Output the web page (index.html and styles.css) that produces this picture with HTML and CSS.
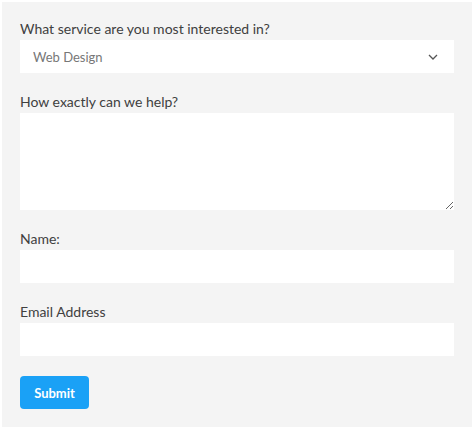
FILE: index.html
```html
<!DOCTYPE html>
<html lang="en">
<head>
    <meta charset="UTF-8">
    <meta name="viewport" content="width=device-width, initial-scale=1.0">
    <title>Contact</title>
    <link rel="stylesheet" href="styles.css">
</head>
<body>
    <form class="contact-form">
        <div class="form-group">
            <label for="service">What service are you most interested in?</label>
            <div class="select-wrap">
                <select id="service">
                    <option>Web Design</option>
                    <option>Branding</option>
                    <option>Marketing</option>
                </select>
                <svg class="chevron" width="10" height="6" viewBox="0 0 10 6">
                    <path d="M1 1l4 4 4-4" fill="none" stroke="#555" stroke-width="1.3"/>
                </svg>
            </div>
        </div>
        <div class="form-group">
            <label for="help">How exactly can we help?</label>
            <textarea id="help"></textarea>
        </div>
        <div class="form-group">
            <label for="name">Name:</label>
            <input type="text" id="name">
        </div>
        <div class="form-group">
            <label for="email">Email Address</label>
            <input type="email" id="email">
        </div>
        <button type="submit" class="submit-btn">Submit</button>
    </form>
</body>
</html>
```

FILE: styles.css
```css
body {
    margin: 0;
    font-family: 'Lato', sans-serif;
    background: #fff;
    color: #404040;
}
.contact-form {
    margin: 2px;
    padding: 18px;
    background: #f4f4f4;
    height: 389px;
}
.form-group {
    display: flex;
    flex-direction: column;
    margin-bottom: 20px;
}
.form-group label {
    font-size: 14px;
    line-height: 18px;
    padding-bottom: 2px;
}
.select-wrap {
    position: relative;
}
.select-wrap select {
    appearance: none;
    -webkit-appearance: none;
    width: 100%;
    height: 33px;
    border: none;
    background: white;
    padding: 0 13px;
    font-family: 'Lato', sans-serif;
    font-size: 13px;
    color: #777;
    outline: none;
    border-radius: 0;
}
.chevron {
    position: absolute;
    right: 16px;
    top: 14px;
    pointer-events: none;
}
textarea,
input {
    border: none;
    background: white;
    outline: none;
    font-family: 'Lato', sans-serif;
    box-sizing: border-box;
    width: 100%;
}
textarea {
    height: 97px;
    resize: vertical;
    display: block;
}
input {
    height: 33px;
}
.submit-btn {
    background: #1aa1f6;
    color: white;
    border: none;
    border-radius: 4px;
    width: 69px;
    height: 33px;
    font-family: 'Lato', sans-serif;
    font-size: 13px;
    font-weight: bold;
    cursor: pointer;
}
```
